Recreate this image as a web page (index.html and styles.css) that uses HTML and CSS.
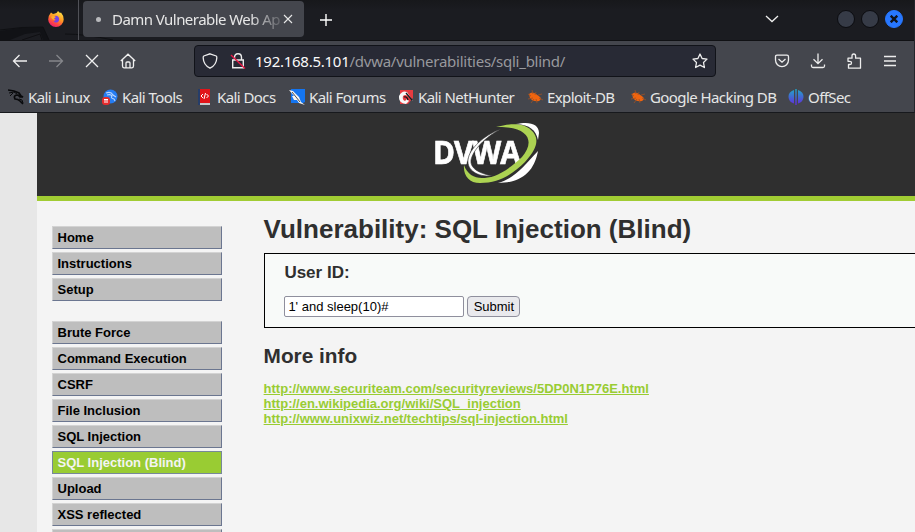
FILE: index.html
```html
<!DOCTYPE html>
<html lang="en">
<head>
<meta charset="utf-8">
<title>Damn Vulnerable Web App</title>
<link rel="stylesheet" href="styles.css">
</head>
<body>
<div class="window">
<header class="chrome">
  <div class="tabbar">
    <svg class="dragon" width="130" height="40" viewBox="0 0 130 40" fill="none"><path d="M0 31L20 28L43 27L49 40H43L40 32L25 34L10 40H0Z" fill="#111216"/><path d="M0 30L22 27.500L43 27L49 40M22 40L40 34L42 40M65 34Q85 34 113 40" stroke="#0f1013"/></svg>
    <div class="pinned">
      <svg width="18" height="18" viewBox="0 0 18 18"><defs><linearGradient id="ff" x1=".8" y1="0" x2=".3" y2="1"><stop offset="0" stop-color="#ffe94a"/><stop offset=".45" stop-color="#ff9a22"/><stop offset=".75" stop-color="#ff4745"/><stop offset="1" stop-color="#e91a72"/></linearGradient></defs><path d="M3 4L4 2.500L6 4L8 3.500Q10 3 11 1L13 3L14 2.500Q17 6 16.700 9.500A7.700 7.500 0 0 1 1.200 9.500Q1 6 3 4Z" fill="url(#ff)"/><path d="M7 6.500Q9 5 11.500 7Q13 10 11 12Q8 13.500 6.500 11L9 10L6 8Z" fill="#7542e5"/><path d="M4 7Q5 5.500 7 6L9 7L7 8.500L8 10.500Q5 10 4 7Z" fill="#ffac2c"/></svg>
    </div>
    <div class="tab"><i class="throbber"></i><span class="tab-title">Damn Vulnerable Web Ap</span>
      <svg width="10" height="10" viewBox="0 0 10 10" stroke="#e8e8e8" stroke-width="1.100"><path d="M1 1L9 9M9 1L1 9"/></svg>
    </div>
    <svg class="plus" width="12" height="12" viewBox="0 0 12 12" stroke="#fff" stroke-width="1.400"><path d="M6 0V12M0 6H12"/></svg>
    <svg class="chevron" width="14" height="8" viewBox="0 0 14 8" fill="none" stroke="#eee" stroke-width="1.300"><path d="M1 1L7 6.500L13 1"/></svg>
    <div class="controls"><i class="ctl"></i><i class="ctl"></i><i class="ctl close"><svg width="8" height="8" viewBox="0 0 8 8" stroke="#10131b" stroke-width="2.400"><path d="M.7 .7L7.300 7.300M7.300 .7L.7 7.300"/></svg></i></div>
  </div>
  <div class="navbar">
    <div class="nav-icons">
      <svg width="16" height="16" viewBox="0 0 16 16" fill="none" stroke="#f0f0f0" stroke-width="1.300"><path d="M15 8H1.500M7.500 2L1.500 8L7.500 14"/></svg>
      <svg width="16" height="16" viewBox="0 0 16 16" fill="none" stroke="#85868b" stroke-width="1.300"><path d="M1 8H14.500M8.500 2L14.500 8L8.500 14"/></svg>
      <svg width="16" height="16" viewBox="0 0 16 16" fill="none" stroke="#f0f0f0" stroke-width="1.300"><path d="M2 2L14 14M14 2L2 14"/></svg>
      <svg width="16" height="16" viewBox="0 0 16 16" fill="none" stroke="#f0f0f0" stroke-width="1.300"><path d="M.8 8L8 1.200L15.200 8M2.500 6.700V13Q2.500 14.800 4 14.800H12Q13.500 14.800 13.500 13V6.700M6 14.500V10Q6 9 7 9H9Q10 9 10 10V14.500"/></svg>
    </div>
    <div class="urlbar">
      <svg width="16" height="16" viewBox="0 0 16 16" fill="none" stroke="#ededed" stroke-width="1.300"><path d="M8 .8L14.200 3Q15 3.500 14.800 5Q14.500 12 8 15.200Q1.500 12 1.200 5Q1 3.500 1.800 3Z"/></svg>
      <svg class="lock" width="16" height="16" viewBox="0 0 16 16" fill="none"><path d="M4.500 7V4.500Q4.500 .8 8 .8T11.500 4.500V7M2.700 7H13.300V14.700H2.700Z" stroke="#ededed" stroke-width="1.400"/><path d="M1 2L15 15.500" stroke="#e81946" stroke-width="1.400"/></svg>
      <span class="url"><b>192.168.5.101</b>/dvwa/vulnerabilities/sqli_blind/</span>
      <svg class="star" width="16" height="16" viewBox="0 0 16 16" fill="none" stroke="#ededed" stroke-width="1.300" stroke-linejoin="round"><path d="M8 1L10.100 5.500L15 6.100L11.500 9.500L12.400 14.500L8 12.100L3.600 14.500L4.500 9.500L1 6.100L5.900 5.500Z"/></svg>
    </div>
    <div class="actions">
      <svg width="16" height="16" viewBox="0 0 16 16" fill="none" stroke="#ededed" stroke-width="1.300"><path d="M3 2.200H13Q14.500 2.200 14.500 3.700V7A6.500 6.700 0 0 1 1.500 7V3.700Q1.500 2.200 3 2.200ZM4.500 6L8 9.200L11.500 6"/></svg>
      <svg width="16" height="16" viewBox="0 0 16 16" fill="none" stroke="#ededed" stroke-width="1.300"><path d="M8 .5V10.500M3.500 6.200L8 10.700L12.500 6.200M1.500 11.500V13Q1.500 14.500 3 14.500H13Q14.500 14.500 14.500 13V11.500"/></svg>
      <svg width="16" height="16" viewBox="0 0 16 16" fill="none" stroke="#ededed" stroke-width="1.300" stroke-linejoin="round"><path d="M2 5.200H6V3Q6 1 7.800 1T9.600 3V5.200H14.500V15.200H2.500V11.500H3.700Q5.500 11.500 5.500 9.900T3.700 8.300H2Z"/></svg>
      <svg width="16" height="16" viewBox="0 0 16 16" stroke="#ededed" stroke-width="1.300"><path d="M2 3.500H14M2 8H14M2 12.500H14"/></svg>
    </div>
  </div>
  <nav class="bookmarks">
    <a><svg width="16" height="16" viewBox="0 0 16 16" fill="none" stroke="#08090b"><path d="M0 1L6 2L11 4L13 7L15 8L12 8L10 6Q5 6 7 10Q10 10 12 12L15 15" stroke-width="1.700"/><path d="M1 4L6 3L9 5M2 7L5 4M11 10Q15 10 15 14" stroke-width="1"/></svg><span>Kali Linux</span></a>
    <a><svg width="16" height="16" viewBox="0 0 16 16"><circle cx="8.500" cy="7.500" r="7" fill="#257cf2"/><path d="M4 4Q9 2 11 6L14 8M5 6Q9 5 10 7Q8 9 12 10L13 12" fill="none" stroke="#b9d6ff" stroke-width="1.100"/><rect y="8" width="8" height="8" rx="3" fill="#e52b2d"/><path d="M2 10.500H6M3 10.500V14M5 10.500V14" stroke="#fff"/></svg><span>Kali Tools</span></a>
    <a><svg width="16" height="16" viewBox="0 0 16 16"><path d="M1 0H3V16H1Z" fill="#263d69"/><path d="M3 0H13V14H3Z" fill="#e11419"/><path d="M3 14H13V16H3Z" fill="#c7c9cb"/><path d="M6 5L4 7L6 9M9.500 5L11.500 7L9.500 9M8.500 4L7 10" fill="none" stroke="#fff"/></svg><span>Kali Docs</span></a>
    <a><svg width="16" height="16" viewBox="0 0 16 16"><path d="M2 0H16V13L14 14H2Z" fill="#1475f1"/><path d="M0 1L4 2L10 8L12 13L16 16L10 14L8 11L5 11L3 7L5 7Z" fill="#f6f6f6"/><path d="M3 3L7 8L11 13" stroke="#222" stroke-width=".8"/></svg><span>Kali Forums</span></a>
    <a><svg width="16" height="16" viewBox="0 0 16 16"><path d="M2 1H15V9L10 15H2Z" fill="#e73b40"/><path d="M1 7Q4 1 9 3L15 12L12 9Q8 4 5 7Q4 11 7 12L9 10L11 12L8 15Q1 14 1 9Z" fill="#f8f8f8"/><path d="M8 4L14 11M6 8Q9 7 10 11" fill="none" stroke="#171719" stroke-width="1.300"/></svg><span>Kali NetHunter</span></a>
    <a><svg width="16" height="16" viewBox="0 0 16 16"><path d="M2 5Q5 2 9 5L13 8Q15 10 12 12Q6 13 3 9Z" fill="#f0640e"/><path d="M1 5L4 7M5 1L6 5M9 3L8 6M1 10L6 9M4 14L7 10M10 14L9 10M11 6L15 5M12 9L16 11" stroke="#9c5026" stroke-width=".8"/></svg><span>Exploit-DB</span></a>
    <a><svg width="16" height="16" viewBox="0 0 16 16"><path d="M2 5Q5 2 9 5L13 8Q15 10 12 12Q6 13 3 9Z" fill="#f0640e"/><path d="M1 5L4 7M5 1L6 5M9 3L8 6M1 10L6 9M4 14L7 10M10 14L9 10M11 6L15 5M12 9L16 11" stroke="#9c5026" stroke-width=".8"/></svg><span>Google Hacking DB</span></a>
    <a><svg width="16" height="16" viewBox="0 0 16 16"><defs><linearGradient id="os" x2="0" y2="1"><stop stop-color="#20a8c9"/><stop offset="1" stop-color="#6329dc"/></linearGradient></defs><path d="M6 1V14.500Q.8 13 .5 8T6 1ZM10 1V14.500Q15.200 13 15.500 8T10 1ZM7.300 0H8.700V16H7.300Z" fill="url(#os)"/></svg><span>OffSec</span></a>
  </nav>
</header>
<div class="viewport">
  <div class="page">
    <div class="banner">
      <div class="logo">
        <span>DVWA</span>
        <svg class="swoosh" width="108" height="64" viewBox="0 0 108 64"><path d="M63 5C78 1 91 1 98 8C106 15 106 25 92 40C80 52 66 61 47 61C36 61 30 53 31 43C34 52 41 56 49 56C59 56 71 52 89 35C102 20 97 4 63 5Z" fill="#acd352"/><path d="M68 7C51 13 36 27 35 38C34 48 44 55 59 54C45 51 37 46 38 38C40 28 52 15 68 7Z" fill="#fff" stroke="#2f2f2f" stroke-width=".6"/><path d="M83 2C97-1 106 2 106 11L105 18C103 8 97 3 83 2ZM105 29C102 45 93 61 65 61C82 56 90 45 105 29Z" fill="#fff"/></svg>
      </div>
    </div>
    <div class="body">
      <div class="menu">
        <ul><li>Home</li><li>Instructions</li><li>Setup</li></ul>
        <ul><li>Brute Force</li><li>Command Execution</li><li>CSRF</li><li>File Inclusion</li><li>SQL Injection</li><li class="selected">SQL Injection (Blind)</li><li>Upload</li><li>XSS reflected</li><li class="blank"></li></ul>
      </div>
      <main>
        <h1>Vulnerability: SQL Injection (Blind)</h1>
        <div class="box">
          <h3>User ID:</h3>
          <form><input type="text" value="1' and sleep(10)#"><button type="button">Submit</button></form>
        </div>
        <h2>More info</h2>
        <div class="links"><a>http://www.securiteam.com/securityreviews/5DP0N1P76E.html</a><a>http://en.wikipedia.org/wiki/SQL_injection</a><a>http://www.unixwiz.net/techtips/sql-injection.html</a></div>
      </main>
    </div>
  </div>
</div>
</div>
</body>
</html>
```
FILE: styles.css
```css
* { box-sizing: border-box; }
body { margin: 0; overflow: hidden; font-family: "Liberation Sans", sans-serif; }
svg { display: block; flex: none; }
.window { height: 532px; display: flex; flex-direction: column; overflow: hidden; }
.chrome { flex: none; height: 113px; background: #44464d; border-right: 1px solid #23252b; border-bottom: 1px solid #17191d; font: 15px/20px "Noto Sans", sans-serif; color: #e6e6e6; }
.tabbar { position: relative; height: 41px; display: flex; align-items: center; background: linear-gradient(#17181b, #1b1c21 25%); border-bottom: 1px solid #101114; }
.dragon { position: absolute; left: 0; top: 0; }
.pinned { position: relative; width: 79px; height: 40px; padding: 10px 0 0 47px; border-right: 1px solid #505157; }
.tab { position: relative; width: 221px; height: 36px; margin: -2px 0 0 4px; padding: 0 11px 0 13px; display: flex; align-items: center; background: #44464d; border-radius: 4px; }
.throbber { flex: none; width: 5px; height: 5px; border-radius: 50%; background: #b9babd; margin-right: 11px; }
.tab-title { flex: none; width: 168px; margin-right: 3px; letter-spacing: -.55px; white-space: nowrap; -webkit-mask-image: linear-gradient(to right, #000 82%, transparent 104%); mask-image: linear-gradient(to right, #000 82%, transparent 104%); }
.plus { margin: -1px 0 0 16px; }
.chevron { margin: -3px 0 0 433px; }
.controls { display: flex; gap: 6px; margin: -3px 0 0 58px; }
.ctl { width: 18px; height: 18px; border-radius: 50%; background: #363b47; border: 1px solid #0b0c10; display: flex; align-items: center; justify-content: center; }
.close { background: #2777ff; border-color: #2777ff; }
.navbar { height: 40px; display: flex; align-items: center; }
.nav-icons { width: 194px; display: flex; gap: 20px; padding-left: 12px; }
.nav-icons svg:last-child { margin-left: -.5px; }
.urlbar { width: 522px; height: 32px; display: flex; align-items: center; padding: 0 7px; background: #282a35; border: 1px solid #111319; border-radius: 4px; }
.lock { margin: 0 9px 0 12px; }
.url { flex: 1; color: #98999e; white-space: nowrap; letter-spacing: -.26px; }
.url b { color: #fafafa; font-weight: 400; }
.actions { display: flex; gap: 20px; margin-left: 58px; }
.bookmarks { height: 31px; padding: 0 0 0 8px; display: grid; grid-template-columns: 94px 95px 92px 109px 129px 103px 158px 90px; align-items: center; }
.bookmarks a { display: flex; gap: 4px; align-items: center; letter-spacing: -.58px; white-space: nowrap; }
.viewport { flex: 1; min-height: 0; background: #e7e7e7; padding-left: 37px; }
.page { height: 100%; background: #f4f4f4; overflow: hidden; }
.banner { height: 88px; background: #2f2f2f; border-bottom: 5px solid #a1cc33; padding: 9px 0 0 396px; }
.logo { position: relative; width: 108px; height: 64px; padding-top: 11px; }
.swoosh { position: absolute; left: 0; top: 0; }
.logo span { display: block; font: 700 33px/38px "Open Sans", sans-serif; color: #fff; letter-spacing: -1px; transform: scaleX(.9); transform-origin: 0 0; -webkit-text-stroke: .7px #fff; }
.body { display: flex; padding-left: 15px; }
.menu { flex: none; width: 170px; padding-top: 25px; }
ul { display: flex; flex-direction: column; gap: 3px; list-style: none; margin: 0 0 20px; padding: 0; }
li { flex: none; height: 23px; padding: 0 5px 0 4.500px; border: 1px solid; border-color: #d3d3d3 #6b7690 #6b7690 #d3d3d3; background: #bebebe; color: #000; font: 700 13px/21px "Liberation Sans", sans-serif; }
li.selected { background: #9c3; border-color: #778899; color: #f4f4f4; }
main { flex: none; width: 720px; margin-left: 41.600px; color: #2f2f2f; }
h1 { font-size: 26px; line-height: 30px; margin: 13px 0 9px; }
.box { height: 75px; background: #f8faf9; border: 1px solid #000; padding: 9px 20px 0 19.800px; }
h3 { margin: 0 0 13px; font-size: 17px; line-height: 20px; }
form { display: flex; gap: 3px; }
input { width: 180px; height: 21px; padding: 0 3px; border: 1px solid #8f8f9d; border-radius: 2px; background: #fff; font: 13px "Liberation Sans", sans-serif; color: #000; }
button { width: 53px; height: 21px; padding: 0; border: 1px solid #8f8f9d; border-radius: 4px; background: #e9e9ed; font: 13px "Liberation Sans", sans-serif; color: #000; }
h2 { font-size: 20.800px; line-height: 24px; margin: 16px 0 13px; }
.links { display: flex; flex-direction: column; align-items: flex-start; font: 700 13px/15px "Liberation Sans", sans-serif; color: #9c3; }
.links a { text-decoration: underline; }
```
